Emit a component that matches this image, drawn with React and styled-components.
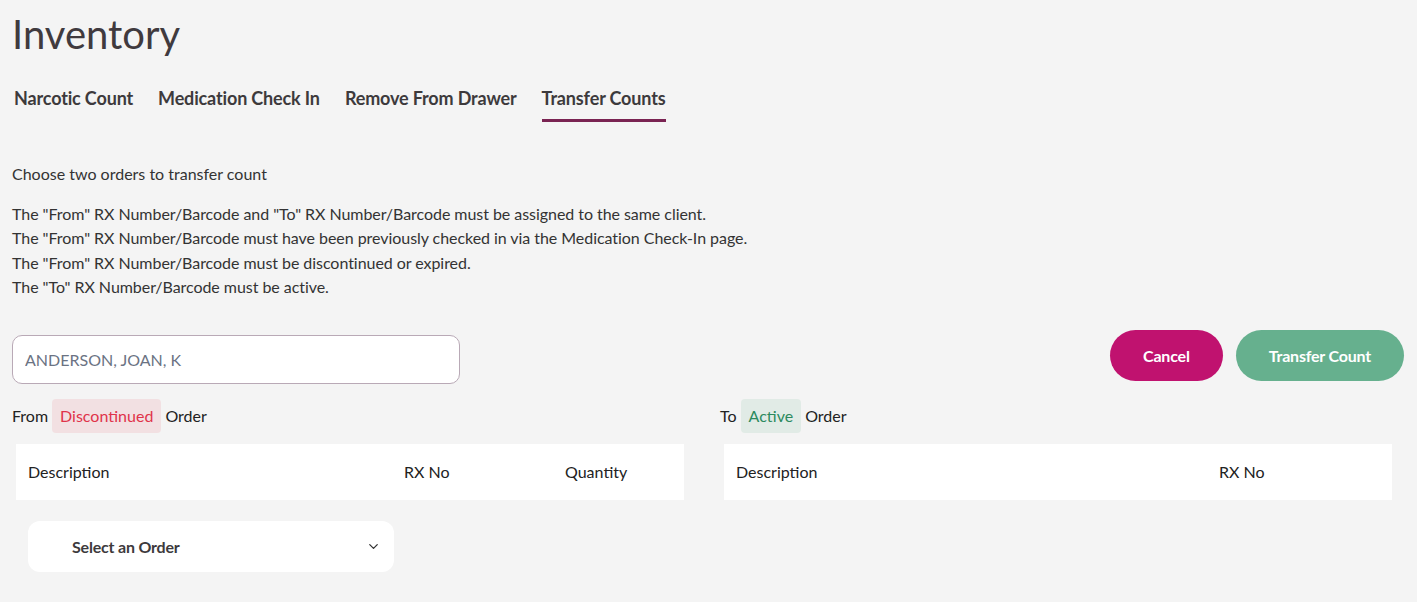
import React from 'react';
import styled, { createGlobalStyle } from 'styled-components';
import { ChevronDown } from 'lucide-react';

const GlobalStyle = createGlobalStyle`
  body {
    margin: 0;
    background: #f4f4f4;
    font-family: Lato, "Open Sans", sans-serif;
    color: #333;
  }
`;

const Page = styled.div`
  padding: 0 13px 0 12px;
`;

const Title = styled.h1`
  margin: 0;
  padding-top: 10px;
  font-size: 40px;
  font-weight: 400;
  line-height: 48px;
  color: #403a3e;
`;

const Tabs = styled.div`
  display: flex;
  gap: 25px;
  margin-top: 29px;
  padding-left: 2px;
`;

const Tab = styled.div`
  font-size: 18px;
  font-weight: 700;
  color: #3d3a3c;
  line-height: 22px;
  letter-spacing: -0.15px;
  padding-bottom: 10px;
  border-bottom: 3px solid ${p => (p.$active ? '#7a2352' : 'transparent')};
`;

const Intro = styled.p`
  margin: 42px 0 0;
  font-size: 16px;
  line-height: 20px;
`;

const Rules = styled.div`
  margin-top: 18px;
  font-size: 16px;
  line-height: 24.4px;
  letter-spacing: -0.05px;
`;

const Toolbar = styled.div`
  display: flex;
  align-items: flex-start;
  justify-content: space-between;
  margin-top: 30px;
`;

const SearchInput = styled.input`
  width: 448px;
  height: 49px;
  box-sizing: border-box;
  border: 1px solid #b9a9b6;
  border-radius: 10px;
  background: #fff;
  padding: 0 12px;
  font-family: Lato, sans-serif;
  font-size: 16px;
  color: #333;
  margin-top: 5px;
  &::placeholder {
    color: #6b7383;
  }
`;

const Buttons = styled.div`
  display: flex;
  gap: 13px;
`;

const Button = styled.button`
  height: 51px;
  padding: 0 ${p => p.$pad}px;
  border: none;
  border-radius: 26px;
  background: ${p => p.$bg};
  color: #fff;
  font-family: Lato, sans-serif;
  font-size: 16px;
  font-weight: 700;
  letter-spacing: -0.2px;
`;

const Columns = styled.div`
  display: grid;
  grid-template-columns: 1fr 1fr;
  gap: 24px;
  margin-top: 15px;
`;

const Column = styled.div``;

const OrderLabel = styled.div`
  display: flex;
  align-items: center;
  gap: 4px;
  font-size: 16px;
  color: #222;
  height: 34px;
`;

const Badge = styled.span`
  display: inline-flex;
  align-items: center;
  height: 34px;
  padding: 0 8px;
  border-radius: 4px;
  background: ${p => (p.$tone === 'red' ? '#f2e0e2' : '#e1ebe6')};
  color: ${p => (p.$tone === 'red' ? '#e0334a' : '#2c8a5e')};
`;

const TableHead = styled.div`
  display: grid;
  grid-template-columns: ${p => p.$cols};
  align-items: center;
  height: 56px;
  margin: 11px 12px 0 4px;
  background: #fff;
  font-size: 16px;
  color: #222;
`;

const HeadCell = styled.div`
  padding: 0 12px;
`;

const Select = styled.div`
  display: flex;
  align-items: center;
  justify-content: space-between;
  width: 366px;
  height: 51px;
  box-sizing: border-box;
  margin: 21px 0 0 16px;
  padding: 0 13px 0 44px;
  background: #fff;
  border-radius: 12px;
  font-size: 16px;
  font-weight: 700;
  color: #3d3a3c;
  letter-spacing: -0.2px;
`;

export default function App() {
  return (
    <Page>
      <GlobalStyle />
      <Title>Inventory</Title>
      <Tabs>
        <Tab>Narcotic Count</Tab>
        <Tab>Medication Check In</Tab>
        <Tab>Remove From Drawer</Tab>
        <Tab $active>Transfer Counts</Tab>
      </Tabs>
      <Intro>Choose two orders to transfer count</Intro>
      <Rules>
        <div>The "From" RX Number/Barcode and "To" RX Number/Barcode must be assigned to the same client.</div>
        <div>The "From" RX Number/Barcode must have been previously checked in via the Medication Check-In page.</div>
        <div>The "From" RX Number/Barcode must be discontinued or expired.</div>
        <div>The "To" RX Number/Barcode must be active.</div>
      </Rules>
      <Toolbar>
        <SearchInput placeholder="ANDERSON, JOAN, K" />
        <Buttons>
          <Button $bg="#c0126f" $pad={33}>Cancel</Button>
          <Button $bg="#66b08e" $pad={33}>Transfer Count</Button>
        </Buttons>
      </Toolbar>
      <Columns>
        <Column>
          <OrderLabel>
            From <Badge $tone="red">Discontinued</Badge> Order
          </OrderLabel>
          <TableHead $cols="376px 161px 1fr">
            <HeadCell>Description</HeadCell>
            <HeadCell>RX No</HeadCell>
            <HeadCell>Quantity</HeadCell>
          </TableHead>
          <Select>
            Select an Order
            <ChevronDown size={15} strokeWidth={2} color="#333" />
          </Select>
        </Column>
        <Column>
          <OrderLabel>
            To <Badge $tone="green">Active</Badge> Order
          </OrderLabel>
          <TableHead $cols="483px 1fr">
            <HeadCell>Description</HeadCell>
            <HeadCell>RX No</HeadCell>
          </TableHead>
        </Column>
      </Columns>
    </Page>
  );
}
